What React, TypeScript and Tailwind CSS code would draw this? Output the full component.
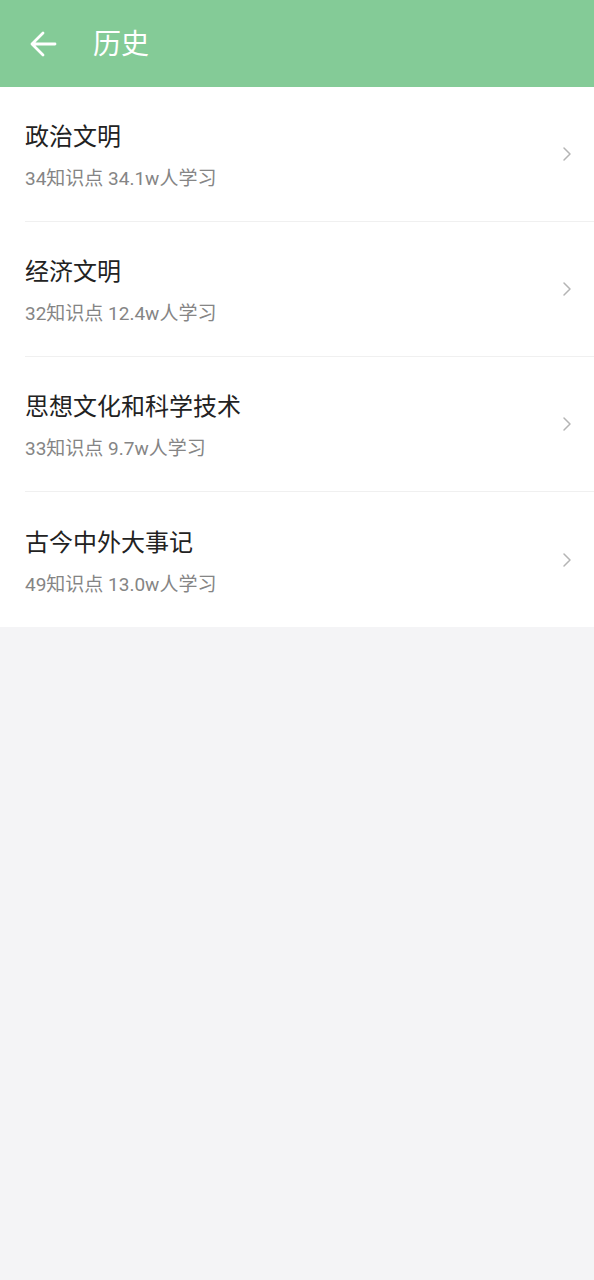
import React from 'react'

interface Topic {
  title: string
  points: number
  learners: string
}

const topics: Topic[] = [
  { title: '政治文明', points: 34, learners: '34.1w' },
  { title: '经济文明', points: 32, learners: '12.4w' },
  { title: '思想文化和科学技术', points: 33, learners: '9.7w' },
  { title: '古今中外大事记', points: 49, learners: '13.0w' },
]

const font = { fontFamily: '"Roboto", "Noto Sans CJK SC", sans-serif' }

export default function App() {
  return (
    <div className="min-h-[1280px] w-full bg-[#f4f4f6]" style={font}>
      {/* Header */}
      <div className="h-[87px] bg-[#84cb97] flex items-center">
        <svg width="28" height="28" viewBox="0 0 28 28" className="ml-[29px]" fill="none">
          <path d="M26 14H3M14 3L3 14l11 11" stroke="white" strokeWidth="2.8" strokeLinecap="round" strokeLinejoin="round" />
        </svg>
        <h1 className="ml-[36px] text-[28px] leading-none text-white mt-[3px]">历史</h1>
      </div>

      {/* List */}
      <div className="bg-white">
        {topics.map((t, i) => (
          <div key={i} className="pl-[25px]">
            <div className={`h-[135px] flex items-center pr-[22px] ${i < topics.length - 1 ? 'border-b border-[#f0f0f0]' : ''}`}>
              <div className="flex-1 flex flex-col pt-[4px]">
                <div className="text-[24px] leading-[32px] text-[#222222]">{t.title}</div>
                <div className="mt-[14px] text-[19px] leading-[24px] text-[#858585]">
                  {t.points}知识点 {t.learners}人学习
                </div>
              </div>
              <svg width="10" height="16" viewBox="0 0 10 16" fill="none">
                <path d="M2 2l6 6-6 6" stroke="#b4b4b4" strokeWidth="1.5" strokeLinecap="round" strokeLinejoin="round" />
              </svg>
            </div>
          </div>
        ))}
      </div>
    </div>
  )
}
